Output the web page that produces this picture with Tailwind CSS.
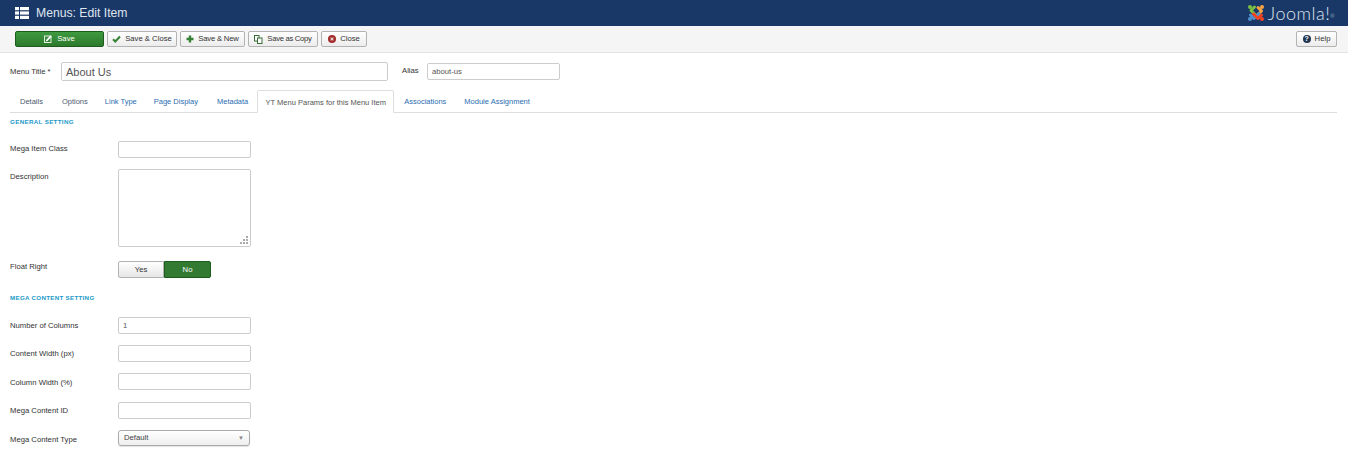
<!DOCTYPE html>
<html lang="en">
<head>
<meta charset="UTF-8">
<title>Menus: Edit Item</title>
<script src="https://cdn.jsdelivr.net/npm/@tailwindcss/browser@4"></script>
</head>
<body class="font-['Liberation_Sans',Arial,sans-serif] bg-white text-[#333] h-[457px] overflow-hidden">

<!-- Title bar -->
<header class="h-[26px] bg-[#1a3867] flex items-center justify-between pl-[15px] pr-[13px]">
  <div class="flex items-center gap-[7px]">
    <svg width="14" height="12" viewBox="0 0 14 12" fill="#fff"><rect x="0" y="0" width="4" height="3.2"/><rect x="5" y="0" width="9" height="3.2"/><rect x="0" y="4.4" width="4" height="3.2"/><rect x="5" y="4.4" width="9" height="3.2"/><rect x="0" y="8.8" width="4" height="3.2"/><rect x="5" y="8.8" width="9" height="3.2"/></svg>
    <h1 class="text-[12.2px] leading-none text-[#dfe5ee]">Menus: Edit Item</h1>
  </div>
  <div class="flex items-center gap-[3px]">
    <svg width="18" height="18" viewBox="0 0 18 18" fill="none" stroke-width="3" stroke-linecap="round" stroke-linejoin="round">
      <path d="M7.5 3 L4 6.5 L9 11.5" stroke="#7ac143"/><circle cx="3" cy="3" r="2" fill="#7ac143"/>
      <path d="M11 3.5 L14.5 7 L9.5 12" stroke="#f9a541"/><circle cx="15" cy="3" r="2" fill="#f9a541"/>
      <path d="M3.5 11 L7 14.5 L12 9.5" stroke="#5091cd"/><circle cx="3" cy="15" r="2" fill="#5091cd"/>
      <path d="M14.5 11 L11 14.5 L6.5 10" stroke="#f44321"/><circle cx="15" cy="15" r="2" fill="#f44321"/>
    </svg>
    <span class="font-['Lato',sans-serif] font-light text-[18px] leading-none tracking-[0.5px] text-[#dfe4ec]">Joomla!<sup class="text-[5px]">®</sup></span>
  </div>
</header>

<!-- Toolbar -->
<div class="h-[27px] bg-[#f5f5f5] border-b border-[#e3e3e3] flex items-center justify-between pl-[15px] pr-[11px] text-[7.7px]">
  <div class="flex items-center gap-[3px]">
    <button class="w-[89px] h-[16px] rounded-[2px] border border-[#1d5c1d] bg-gradient-to-b from-[#3f9a3f] to-[#2c792c] text-white flex items-center justify-center gap-[5px]">
      <svg width="8" height="8" viewBox="0 0 8 8"><rect x="0.5" y="1" width="6.5" height="6.5" fill="none" stroke="#dfeedd"/><path d="M2 5 L6.5 0.5 L7.7 1.7 L3.2 6.2 H2Z" fill="#fff"/></svg>Save
    </button>
    <button class="w-[70px] h-[16px] rounded-[2px] border border-[#b3b3b3] bg-gradient-to-b from-white to-[#ececec] flex items-center justify-center gap-[4px]">
      <svg width="9" height="8" viewBox="0 0 9 8"><path d="M1 4.2 L3.3 6.5 L8 1.5" fill="none" stroke="#378137" stroke-width="2"/></svg>Save &amp; Close
    </button>
    <button class="w-[65px] h-[16px] rounded-[2px] border border-[#b3b3b3] bg-gradient-to-b from-white to-[#ececec] flex items-center justify-center gap-[4px] tracking-[-0.2px]">
      <svg width="8" height="8" viewBox="0 0 8 8"><path d="M4 0.5 V7.5 M0.5 4 H7.5" stroke="#378137" stroke-width="2.4"/></svg>Save &amp; New
    </button>
    <button class="w-[70px] h-[16px] rounded-[2px] border border-[#b3b3b3] bg-gradient-to-b from-white to-[#ececec] flex items-center justify-center gap-[4px] tracking-[-0.3px]">
      <svg width="9" height="9" viewBox="0 0 9 9" fill="#fff" stroke="#3a6f3a"><rect x="0.5" y="0.5" width="4.5" height="5.5"/><rect x="3.5" y="3" width="4.5" height="5.5"/></svg>Save as Copy
    </button>
    <button class="w-[46px] h-[16px] rounded-[2px] border border-[#b3b3b3] bg-gradient-to-b from-white to-[#ececec] flex items-center justify-center gap-[4px]">
      <svg width="8" height="8" viewBox="0 0 8 8"><circle cx="4" cy="4" r="4" fill="#a32a2a"/><path d="M2.6 2.6 L5.4 5.4 M5.4 2.6 L2.6 5.4" stroke="#e9d0d0" stroke-width="1.2"/></svg>Close
    </button>
  </div>
  <button class="w-[41px] h-[16px] rounded-[2px] border border-[#b3b3b3] bg-gradient-to-b from-white to-[#ececec] flex items-center justify-center gap-[4px]">
    <span class="w-[8px] h-[8px] rounded-full bg-[#1f3550] text-white text-[7px] leading-[8px] font-bold">?</span>Help
  </button>
</div>

<main class="pl-[10px] pr-[11px]">
  <!-- Title + alias -->
  <div class="flex items-center h-[37px] text-[7.7px]">
    <label class="w-[51px]">Menu Title *</label>
    <input type="text" value="About Us" class="w-[327px] h-[19px] px-[4px] text-[11px] text-[#555] border border-[#ccc] rounded-[2px] bg-white">
    <label class="ml-[14px] w-[25px] pb-[1px]">Alias</label>
    <input type="text" value="about-us" class="w-[133px] h-[17px] px-[4px] text-[7.7px] text-[#555] border border-[#ccc] rounded-[2px] bg-white">
  </div>

  <!-- Tabs -->
  <nav class="flex items-end h-[23px] border-b border-[#ddd] text-[7.5px] pl-[1px]">
    <a class="pl-[9px] pr-[10px] h-[22px] leading-[23px] text-[#4d5b70]" href="#">Details</a>
    <a class="pl-[9px] pr-[8px] h-[22px] leading-[23px] text-[#4d5b70]" href="#">Options</a>
    <a class="pl-[9px] pr-[8px] h-[22px] leading-[23px] text-[#2a6db0]" href="#">Link Type</a>
    <a class="pl-[9px] pr-[10px] h-[22px] leading-[23px] text-[#2a6db0]" href="#">Page Display</a>
    <a class="px-[9px] h-[22px] leading-[23px] text-[#2a6db0]" href="#">Metadata</a>
    <a class="w-[137px] text-center h-[23px] -mb-px leading-[23px] text-[#555] bg-white border border-[#ddd] border-b-white rounded-t-[2px]" href="#">YT Menu Params for this Menu Item</a>
    <a class="pl-[10px] pr-[9px] h-[22px] leading-[23px] text-[#2a6db0]" href="#">Associations</a>
    <a class="px-[9px] h-[22px] leading-[23px] text-[#2a6db0]" href="#">Module Assignment</a>
  </nav>

  <!-- Fields -->
  <section class="text-[7.7px]">
    <h3 class="mt-[4px] h-[10px] leading-[10px] text-[6.2px] font-bold uppercase tracking-[0.35px] text-[#1b9ac9]">General Setting</h3>
    <div class="mt-[14px] flex">
      <label class="w-[108px] pt-[2px]">Mega Item Class</label>
      <input type="text" class="w-[133px] h-[17px] border border-[#ccc] rounded-[2px] bg-white">
    </div>
    <div class="mt-[11px] flex">
      <label class="w-[108px] pt-[2px]">Description</label>
      <div class="relative w-[133px] h-[78px]">
        <textarea class="block w-full h-full border border-[#ccc] rounded-[2px] bg-white resize-none"></textarea>
        <svg class="absolute right-[3px] bottom-[3px]" width="8" height="8" viewBox="0 0 8 8" fill="#aaa"><rect x="6" y="0" width="2" height="2"/><rect x="3" y="3" width="2" height="2"/><rect x="6" y="3" width="2" height="2"/><rect x="0" y="6" width="2" height="2"/><rect x="3" y="6" width="2" height="2"/><rect x="6" y="6" width="2" height="2"/></svg>
      </div>
    </div>
    <div class="mt-[14px] flex">
      <label class="w-[108px]">Float Right</label>
      <div class="flex h-[17px]">
        <button class="w-[46px] rounded-l-[2px] border border-[#b3b3b3] bg-gradient-to-b from-white to-[#e6e6e6]">Yes</button>
        <button class="w-[47px] rounded-r-[2px] border border-[#1d5c1d] bg-[#327a32] text-white">No</button>
      </div>
    </div>

    <h3 class="mt-[15px] h-[10px] leading-[10px] text-[6.2px] font-bold uppercase tracking-[0.3px] text-[#1b9ac9]">Mega Content Setting</h3>
    <div class="mt-[14px] flex">
      <label class="w-[108px] pt-[3px]">Number of Columns</label>
      <input type="text" value="1" class="w-[133px] h-[17px] px-[4px] text-[7.7px] text-[#555] border border-[#ccc] rounded-[2px] bg-white">
    </div>
    <div class="mt-[11px] flex">
      <label class="w-[108px] pt-[3px]">Content Width (px)</label>
      <input type="text" class="w-[133px] h-[17px] border border-[#ccc] rounded-[2px] bg-white">
    </div>
    <div class="mt-[11px] flex">
      <label class="w-[108px] pt-[4px]">Column Width (%)</label>
      <input type="text" class="w-[133px] h-[17px] border border-[#ccc] rounded-[2px] bg-white">
    </div>
    <div class="mt-[12px] flex">
      <label class="w-[108px] pt-[3px]">Mega Content ID</label>
      <input type="text" class="w-[133px] h-[17px] border border-[#ccc] rounded-[2px] bg-white">
    </div>
    <div class="mt-[11px] flex">
      <label class="w-[108px] pt-[4px]">Mega Content Type</label>
      <div class="w-[132px] h-[16px] pl-[5px] pr-[5px] flex items-center justify-between border border-[#aaa] rounded-[3px] shadow-[0_1px_1px_rgba(0,0,0,0.12)] bg-gradient-to-b from-white to-[#eeeeee] text-[#444]">Default<span class="text-[6px] text-[#888]">▼</span></div>
    </div>
  </section>
</main>
</body>
</html>
